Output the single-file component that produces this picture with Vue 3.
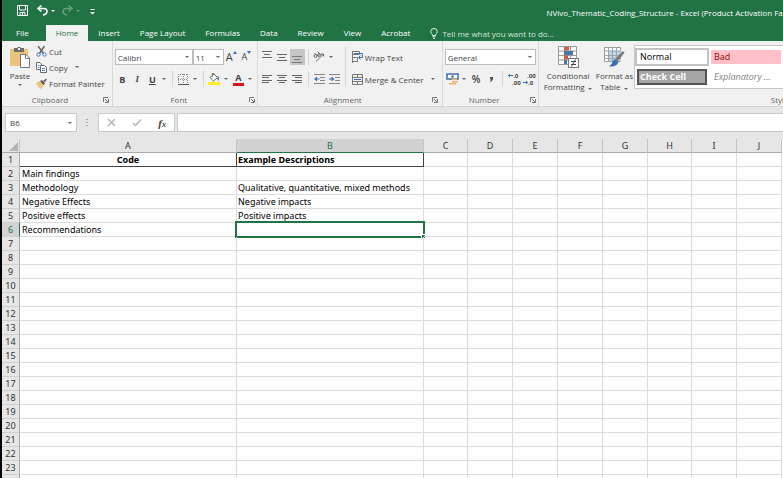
<script setup>
import { ref } from 'vue'

const tabs = ['Insert', 'Page Layout', 'Formulas', 'Data', 'Review', 'View', 'Acrobat']

const columns = [
  { name: 'A', width: 217 },
  { name: 'B', width: 187 },
  { name: 'C', width: 44 },
  { name: 'D', width: 45 },
  { name: 'E', width: 45 },
  { name: 'F', width: 45 },
  { name: 'G', width: 45 },
  { name: 'H', width: 44 },
  { name: 'I', width: 45 },
  { name: 'J', width: 45 },
]

const cells = {
  A1: 'Code',
  B1: 'Example Descriptions',
  A2: 'Main findings',
  A3: 'Methodology',
  B3: 'Qualitative, quantitative, mixed methods',
  A4: 'Negative Effects',
  B4: 'Negative impacts',
  A5: 'Positive effects',
  B5: 'Positive impacts',
  A6: 'Recommendations',
}

const rowCount = 23
const activeCol = ref('B')
const activeRow = ref(6)
const formula = ref('')
const search = ref('')

function select(col, row) {
  activeCol.value = col
  activeRow.value = row
  formula.value = cells[col + row] || ''
}
</script>

<template>
  <div class="window">
    <header class="top">
      <div class="title-bar">
        <div class="quick">
          <button class="qbtn save" aria-label="Save">
            <svg width="11" height="11" viewBox="0 0 11 11" fill="none" stroke="#fff">
              <path d="M.5 .5H10.500V10.500H.5zM2.500 .5V5H8.500V.5M3 10.500V7.500H8V10.500M5.500 8V10" />
            </svg>
          </button>
          <button class="qbtn" aria-label="Undo">
            <svg width="11" height="11" viewBox="0 0 11 11" fill="none" stroke="#fff" stroke-width="1.600">
              <path d="M4.500 .5L1 3.500L4.500 6.500M1 3.500H6.500C9 3.500 10 5 10 6.500S8.500 9.500 6 10" />
            </svg>
          </button>
          <span class="qcaret"></span>
          <button class="qbtn faded" aria-label="Redo">
            <svg width="11" height="11" viewBox="0 0 11 11" fill="none" stroke="#fff" stroke-width="1.600">
              <path d="M6.500 .5L10 3.500L6.500 6.500M10 3.500H4.500C2 3.500 1 5 1 6.500S2.500 9.500 5 10" />
            </svg>
          </button>
          <span class="qcaret faded"></span>
          <button class="qbtn more" aria-label="Customize Quick Access Toolbar">
            <svg width="5" height="6" viewBox="0 0 5 6"><path d="M.5 0H4.500V1H.5zM0 3H5L2.500 5.500z" fill="#fff" /></svg>
          </button>
        </div>
        <div class="title">NVivo_Thematic_Coding_Structure - Excel (Product Activation Failed)</div>
      </div>
      <nav class="tabs">
        <button class="tab file">File</button>
        <button class="tab active">Home</button>
        <button v-for="t in tabs" :key="t" class="tab">{{ t }}</button>
        <label class="tell">
          <svg width="8" height="11" viewBox="0 0 8 11" fill="none" stroke="#e4f0e9">
            <path d="M2.500 7.500C2.500 6 .7 5.500 .7 3.600A3.300 3.100 0 0 1 7.300 3.600C7.300 5.500 5.500 6 5.500 7.500zM2.500 8.800H5.500M3 10.300H5" />
          </svg>
          <input v-model="search" placeholder="Tell me what you want to do..." aria-label="Tell me what you want to do">
        </label>
      </nav>
    </header>

    <div class="ribbon">
      <section class="group clipboard">
        <div class="body">
          <button class="big paste">
            <svg width="22" height="22" viewBox="0 0 22 22">
              <rect x="1" y="3" width="18" height="17" fill="#ebc37c" />
              <path d="M5 2H8C8 .5 12 .5 12 2H15V6H5z" fill="#6d6d6d" />
              <rect x="9" y="2" width="2" height="2" fill="#f1f1f1" />
              <path d="M11.500 8.500H17L20.500 12V21.500H11.500z" fill="#fff" stroke="#777" />
              <path d="M16.500 8.500V12.500H20.500" fill="none" stroke="#777" />
            </svg>
            <span>Paste</span>
            <i class="caret"></i>
          </button>
          <div class="stack">
            <button class="item">
              <svg width="11" height="11" viewBox="0 0 11 11" fill="none">
                <path d="M2 0L7.500 7.500M8.500 0L3.500 7.500" stroke="#666" stroke-width="1.500" />
                <circle cx="2.500" cy="8.500" r="1.700" stroke="#4a7ebb" />
                <circle cx="8.500" cy="8.500" r="1.700" stroke="#4a7ebb" />
              </svg>
              <span>Cut</span>
            </button>
            <button class="item">
              <svg width="11" height="11" viewBox="0 0 11 11" fill="#fff" stroke="#6a6a6a">
                <path d="M.5 .5H4L5.500 2V7.500H.5z" />
                <path d="M4.500 3.500H8.500L10.500 5.500V10.500H4.500z" />
                <path d="M2 3.500H3.500M2 5.500H3.500M6 6.500H9M6 8.500H9" stroke="#4a7ebb" />
              </svg>
              <span>Copy</span>
              <i class="caret"></i>
            </button>
            <button class="item">
              <svg width="11" height="11" viewBox="0 0 11 11">
                <path d="M0 5L4 3L8 7L5 11C3 10 1 8 0 5z" fill="#ebc37c" />
                <path d="M4 3L6 2L9 5.500L7.500 7z" fill="#555" />
                <path d="M7 3L10 .5L11 1.500L8.500 4.500z" fill="#666" />
              </svg>
              <span>Format Painter</span>
            </button>
          </div>
        </div>
        <footer class="caption">
          Clipboard
          <button class="launch" aria-label="Clipboard options">
            <svg width="6" height="6" fill="none" stroke="#777"><path d="M.5 5V.5H5M2 2L5 5M5.500 2V5.500H2" /></svg>
          </button>
        </footer>
      </section>

      <section class="group">
        <div class="body rows">
          <div class="row">
            <div class="drop wide">
              <select aria-label="Font"><option>Calibri</option></select>
            </div>
            <div class="drop small">
              <select aria-label="Font size"><option>11</option></select>
            </div>
            <button class="tool grow" aria-label="Increase font size">A<svg width="4" height="3"><path d="M0 3L2 0L4 3z" fill="#3b6fb5" /></svg></button>
            <button class="tool grow less" aria-label="Decrease font size">A<svg width="4" height="3"><path d="M0 0H4L2 3z" fill="#3b6fb5" /></svg></button>
          </div>
          <div class="row">
            <button class="tool letter">B</button>
            <button class="tool letter italic">I</button>
            <button class="tool letter under">U</button>
            <i class="caret"></i>
            <span class="sep"></span>
            <button class="tool" aria-label="Borders">
              <svg width="11" height="11" viewBox="0 0 11 11" fill="none">
                <path d="M.5 0V10M5.500 0V10M9.500 0V10M0 .5H10M0 5.500H10" stroke="#8a8a8a" stroke-dasharray="1 1" />
                <path d="M0 10.500H11" stroke="#555" />
              </svg>
            </button>
            <i class="caret"></i>
            <span class="sep"></span>
            <button class="tool" aria-label="Fill color">
              <svg width="12" height="12" viewBox="0 0 12 12">
                <path d="M2 4.500L6 1L9.500 4.500L5.500 8z" fill="#fff" stroke="#666" />
                <path d="M4.500 3.500V.5H6" fill="none" stroke="#666" />
                <path d="M9.500 3C11.500 4 11 6.500 10.500 8C9.500 7 9 5 9.500 3z" fill="#3b6fb5" />
                <rect x="0" y="9" width="12" height="3" fill="#ffee1f" />
              </svg>
            </button>
            <i class="caret"></i>
            <button class="tool color">A</button>
            <i class="caret"></i>
          </div>
        </div>
        <footer class="caption">
          Font
          <button class="launch" aria-label="Font options">
            <svg width="6" height="6" fill="none" stroke="#777"><path d="M.5 5V.5H5M2 2L5 5M5.500 2V5.500H2" /></svg>
          </button>
        </footer>
      </section>

      <section class="group alignment">
        <div class="body">
          <div class="inner">
            <div class="row">
              <button class="tool" aria-label="Top align">
                <svg width="10" height="14" stroke="#666"><path d="M0 1.500H10M2 4.500H8M0 7.500H10" /></svg>
              </button>
              <button class="tool" aria-label="Middle align">
                <svg width="10" height="14" stroke="#666"><path d="M0 4.500H10M2 7.500H8M0 10.500H10" /></svg>
              </button>
              <button class="tool pressed" aria-label="Bottom align">
                <svg width="10" height="14" stroke="#777"><path d="M0 6.500H10M2 9.500H8M0 12.500H10" /></svg>
              </button>
              <span class="sep"></span>
              <button class="tool" aria-label="Orientation">
                <svg width="12" height="12" viewBox="0 0 12 12" fill="none" stroke="#666">
                  <path d="M3 10.500L10.500 3M8 3H10.500V5.500" />
                  <circle cx="2.500" cy="5" r="1.500" />
                  <path d="M1.500 2L5 5.500M4.500 .5L8 4" />
                  <circle cx="6" cy="4" r="1.300" />
                </svg>
              </button>
              <i class="caret"></i>
            </div>
            <div class="row">
              <button class="tool" aria-label="Align left">
                <svg width="10" height="10" stroke="#666"><path d="M0 1.500H10M0 3.500H7M0 6.500H10M0 8.500H7" /></svg>
              </button>
              <button class="tool" aria-label="Center">
                <svg width="10" height="10" stroke="#666"><path d="M0 1.500H10M2 3.500H8M0 6.500H10M2 8.500H8" /></svg>
              </button>
              <button class="tool" aria-label="Align right">
                <svg width="10" height="10" stroke="#666"><path d="M0 1.500H10M3 3.500H10M0 6.500H10M3 8.500H10" /></svg>
              </button>
              <span class="sep"></span>
              <button class="tool" aria-label="Decrease indent">
                <svg width="11" height="11" viewBox="0 0 11 11">
                  <path d="M0 .5H11M6 3.500H11M6 6.500H11M0 9.500H11" stroke="#888" />
                  <path d="M0 5L3 2.500V4.500H5.500V5.500H3V7.500z" fill="#3b6fb5" />
                </svg>
              </button>
              <button class="tool" aria-label="Increase indent">
                <svg width="11" height="11" viewBox="0 0 11 11">
                  <path d="M0 .5H11M6 3.500H11M6 6.500H11M0 9.500H11" stroke="#888" />
                  <path d="M5.500 5L2.500 2.500V4.500H0V5.500H2.500V7.500z" fill="#3b6fb5" />
                </svg>
              </button>
            </div>
          </div>
          <span class="sep tall"></span>
          <div class="inner">
            <div class="row">
              <button class="item">
                <svg width="11" height="12" viewBox="0 0 11 12" fill="none">
                  <path d="M.5 0V12M1 .5H7.500V3.500H1M1 6.500H5.500V10.500H1" stroke="#777" />
                  <path d="M2 2.500H10.500V6.500H7M8.500 4.500L6.500 6.500L8.500 8.500" stroke="#3b6fb5" />
                </svg>
                <span>Wrap Text</span>
              </button>
            </div>
            <div class="row">
              <button class="item">
                <svg width="11" height="11" viewBox="0 0 11 11" fill="none">
                  <path d="M.5 .5H10.500V10.500H.5zM0 3.500H11M0 7.500H11M5.500 0V3M5.500 8V11" stroke="#777" />
                  <path d="M2 5.500H9" stroke="#3b6fb5" />
                </svg>
                <span>Merge &amp; Center</span>
                <i class="caret"></i>
              </button>
            </div>
          </div>
        </div>
        <footer class="caption">
          Alignment
          <button class="launch" aria-label="Alignment options">
            <svg width="6" height="6" fill="none" stroke="#777"><path d="M.5 5V.5H5M2 2L5 5M5.500 2V5.500H2" /></svg>
          </button>
        </footer>
      </section>

      <section class="group">
        <div class="body rows">
          <div class="row">
            <div class="drop number">
              <select aria-label="Number format"><option>General</option></select>
            </div>
          </div>
          <div class="row">
            <button class="tool" aria-label="Accounting format">
              <svg width="13" height="12" viewBox="0 0 13 12">
                <path d="M1 1H12V6H1z" fill="#fff" stroke="#3b6fb5" stroke-width="1.500" />
                <circle cx="6.500" cy="3.500" r="1.300" fill="#3b6fb5" />
                <path d="M6 5.500H11V7H6zM6 8H12V9.500H6zM3 10H10V11.500H3z" fill="#ebb665" />
              </svg>
            </button>
            <i class="caret"></i>
            <button class="tool percent">%</button>
            <button class="tool" aria-label="Comma style">
              <svg width="5" height="7"><path d="M1 1H4V3.500L2 6H1L2 3.500H1z" fill="#555" /></svg>
            </button>
            <span class="sep"></span>
            <button class="tool decimals" aria-label="Increase decimal">
              <svg width="5" height="5"><path d="M0 2.500L2 .5V2H5V3H2V4.500z" fill="#3b6fb5" /></svg>
              <span>.0</span><span class="long">.00</span>
            </button>
            <button class="tool decimals" aria-label="Decrease decimal">
              <span class="long">.00</span>
              <svg width="5" height="5"><path d="M5 2.500L3 .5V2H0V3H3V4.500z" fill="#3b6fb5" /></svg>
              <span>.0</span>
            </button>
          </div>
        </div>
        <footer class="caption">
          Number
          <button class="launch" aria-label="Number options">
            <svg width="6" height="6" fill="none" stroke="#777"><path d="M.5 5V.5H5M2 2L5 5M5.500 2V5.500H2" /></svg>
          </button>
        </footer>
      </section>

      <section class="group styles">
        <div class="body">
          <button class="big">
            <svg width="22" height="22" viewBox="0 0 22 22">
              <path d="M1.500 .5H19.500V18.500H1.500z" fill="#fff" stroke="#999" />
              <path d="M1 5H20M1 9.500H20M1 14H20M7.500 0V19M13.500 0V19" stroke="#999" />
              <path d="M7 1H12V4.500H7zM7 9.500H11V13.500H7z" fill="#cf5b45" />
              <path d="M7 5H16V9H7zM7 14H10V18H7z" fill="#4677a8" />
              <rect x="11.500" y="12.500" width="10" height="9" fill="#fff" stroke="#777" />
              <path d="M14 15.500H19M14 18.500H19M18.500 13.500L14.500 20.500" stroke="#444" />
            </svg>
            <span>Conditional</span>
            <span>Formatting <i class="caret"></i></span>
          </button>
          <button class="big table">
            <svg width="22" height="22" viewBox="0 0 22 22">
              <path d="M1.500 1.500H17.500V15.500H1.500z" fill="#fff" stroke="#999" />
              <rect x="6" y="5" width="12" height="10" fill="#c3d3e6" />
              <path d="M1 5H18M1 9.500H18M1 12.500H18M5.500 1V16M9.500 1V16M13.500 1V16" stroke="#9aa5b1" />
              <path d="M19.500 5L21.500 6.500L15 15L12.500 13z" fill="#777" />
              <path d="M12 13L15.500 16C14 20 10 21 6 20.500C9 19 9 15 12 13z" fill="#3b6fb5" />
            </svg>
            <span>Format as</span>
            <span>Table <i class="caret"></i></span>
          </button>
          <div class="gallery">
            <button class="swatch normal">Normal</button>
            <button class="swatch bad">Bad</button>
            <button class="swatch check">Check Cell</button>
            <button class="swatch note">Explanatory ...</button>
          </div>
        </div>
        <footer class="caption">Styles</footer>
      </section>
    </div>

    <div class="formula-bar">
      <div class="name-box">
        <input :value="activeCol + activeRow" aria-label="Name box" readonly>
        <i class="caret"></i>
      </div>
      <span class="dots"></span>
      <div class="fx-box">
        <button aria-label="Cancel"><svg width="9" height="9" stroke="#b5b5b5" stroke-width="1.500"><path d="M1 1L8 8M8 1L1 8" /></svg></button>
        <button aria-label="Enter"><svg width="10" height="9" fill="none" stroke="#b5b5b5" stroke-width="1.500"><path d="M1 5L3.500 7.500L9 1.500" /></svg></button>
        <button class="fx" aria-label="Insert function">f<sub>x</sub></button>
      </div>
      <input v-model="formula" class="formula" aria-label="Formula bar">
    </div>

    <div class="grid">
      <table class="sheet">
        <colgroup>
          <col class="head-col">
          <col v-for="c in columns" :key="c.name" :style="{ width: c.width + 'px' }">
        </colgroup>
        <thead>
          <tr>
            <th class="corner"><svg width="9" height="9"><path d="M9 0V9H0z" fill="#b4b4b4" /></svg></th>
            <th v-for="c in columns" :key="c.name" scope="col" :class="{ current: c.name === activeCol }">{{ c.name }}</th>
          </tr>
        </thead>
        <tbody>
          <tr v-for="r in rowCount" :key="r" :class="{ heading: r === 1 }">
            <th scope="row" :class="{ current: r === activeRow }">{{ r }}</th>
            <td v-for="c in columns" :key="c.name" :class="'col-' + c.name" @click="select(c.name, r)">
              {{ cells[c.name + r] }}
              <span v-if="c.name === activeCol && r === activeRow" class="selection"></span>
            </td>
          </tr>
          <tr>
            <th></th>
            <td v-for="c in columns" :key="c.name"></td>
          </tr>
        </tbody>
      </table>
    </div>
  </div>
</template>

<style>
body {
  margin: 0;
  overflow: hidden;
}
</style>

<style scoped>
.window {
  height: 100vh;
  box-sizing: border-box;
  display: flex;
  flex-direction: column;
  overflow: hidden;
  border-left: 2px solid #000;
  background: #e6e6e6;
  color: #444;
  font-family: 'Open Sans', 'Noto Sans', sans-serif;
  font-size: 8px;
}

button,
input,
select {
  margin: 0;
  padding: 0;
  border: 0;
  border-radius: 0;
  background: none;
  color: inherit;
  font: inherit;
  outline: none;
}

svg {
  display: block;
  flex: none;
}

/* title bar and tabs */
.top {
  background: #217346;
  color: #fff;
}

.title-bar {
  display: flex;
  height: 25px;
}

.quick {
  flex: 9;
  display: flex;
  align-items: center;
  padding: 0 0 4px 12px;
}

.qbtn {
  width: 16px;
  height: 16px;
  display: flex;
  align-items: center;
  justify-content: center;
}

.save { margin-right: 4px; }
.more { padding-top: 3px; }

.qcaret {
  margin: 0 4px 0 1px;
  border: 2px solid transparent;
  border-top-color: #fff;
  border-bottom: 0;
}

.faded { opacity: 0.3; }

.title {
  flex: 4;
  min-width: 0;
  line-height: 25px;
  white-space: nowrap;
}

.tabs {
  display: flex;
  height: 16px;
}

.tab {
  padding: 0 10px;
  line-height: 16px;
  white-space: nowrap;
}

.tab.file { padding: 0 17px 0 14px; }
.tab.active { background: #f1f1f1; color: #217346; }

.tell {
  flex: 1;
  display: flex;
  align-items: center;
  gap: 4px;
  margin-left: 10px;
}

.tell input { flex: 1; }
.tell input::placeholder { color: #d3e5da; opacity: 1; }

/* ribbon */
.ribbon {
  display: flex;
  height: 65px;
  background: #f1f1f1;
  border-bottom: 1px solid #d2d2d2;
}

.group {
  flex: none;
  display: flex;
  flex-direction: column;
  padding: 0 2px;
  border-right: 1px solid #dadada;
}

.clipboard { padding: 0 7px 0 5px; }
.alignment { padding-right: 4px; }

.body {
  display: flex;
  height: 52px;
  padding-top: 2px;
}

.caption {
  position: relative;
  padding-right: 12px;
  line-height: 12px;
  text-align: center;
  color: #666;
}

.launch {
  position: absolute;
  right: 0;
  top: 3px;
}

.clipboard .launch { right: -4px; }

.caret {
  flex: none;
  display: inline-flex;
  align-items: center;
  justify-content: center;
  width: 9px;
  height: 9px;
}

.caret::after {
  content: '';
  border: 2px solid transparent;
  border-top-color: #666;
  border-bottom: 0;
}

.big {
  display: flex;
  flex-direction: column;
  align-items: center;
  padding: 3px 2px 0;
  line-height: 11px;
  white-space: nowrap;
}

.big.table { padding: 3px 1px 0; }
.big svg { margin-bottom: 2px; }
.big .caret { width: 6px; height: 8px; }

.stack {
  display: flex;
  flex-direction: column;
}

.item {
  display: flex;
  align-items: center;
  gap: 2px;
  height: 16px;
  padding-left: 3px;
  white-space: nowrap;
}

.item .caret { margin-left: 3px; }

.rows {
  flex-direction: column;
  height: 51px;
  padding-top: 3px;
}

.inner { padding-top: 1px; }

.row {
  display: flex;
  align-items: center;
  height: 18px;
  padding-top: 4px;
}

.tool {
  width: 15px;
  height: 16px;
  display: flex;
  align-items: center;
  justify-content: center;
}

.pressed { background: #c5c5c5; }

.sep {
  width: 1px;
  height: 16px;
  margin: 0 3px;
  background: #d5d5d5;
}

.sep.tall { height: 40px; margin-top: 4px; }

.drop {
  position: relative;
  height: 14px;
  border: 1px solid #bcbcbc;
  background: #fff;
}

.drop select {
  width: 100%;
  height: 14px;
  padding-left: 2px;
  appearance: none;
}

.drop::after {
  content: '';
  position: absolute;
  right: 3px;
  top: 6px;
  border: 2px solid transparent;
  border-top-color: #666;
  border-bottom: 0;
}

.wide { width: 76px; }
.small { width: 29px; }
.number { width: 89px; }

.grow { align-items: flex-start; font-size: 11px; line-height: 16px; }
.less { font-size: 9px; }
.grow svg { margin-top: 2px; }

.letter { font-size: 9px; font-weight: 700; }
.italic { font-family: 'Liberation Serif', serif; font-style: italic; }
.under { text-decoration: underline; }

.color {
  width: 11px;
  height: 13px;
  margin: 0 2px;
  border-bottom: 3px solid #d8131b;
  font-size: 9px;
  font-weight: 700;
}

.percent { font-size: 10px; font-weight: 600; }

.decimals {
  flex-wrap: wrap;
  align-content: center;
  font-family: Roboto, sans-serif;
  font-size: 6px;
  font-weight: 700;
  line-height: 7px;
}

.long { width: 100%; text-align: right; }

.styles { flex: 0 0 480px; padding-left: 3px; }
.styles .caption { padding-right: 0; }

.gallery {
  flex: 1;
  display: grid;
  grid-template-columns: 74px 70px;
  grid-template-rows: 18px 16px;
  gap: 3px 2px;
  height: 38px;
  margin-top: 2px;
  padding: 2px 0;
  border: 1px solid #c6c6c6;
  background: #fff;
}

.swatch {
  padding: 0 3px;
  text-align: left;
  font-size: 9px;
  line-height: 12px;
  white-space: nowrap;
}

.normal { border: 2px solid #c3c3c3; color: #000; }
.bad { margin: 2px 0; background: #ffc0c8; color: #9c0006; }
.check { margin: 0 2px; padding: 0 1px; border: 2px solid #555; background: #a5a5a5; color: #fff; font-weight: 700; }
.note { color: #7f7f7f; font-style: italic; }

/* formula bar */
.formula-bar {
  display: flex;
  height: 19px;
  padding: 6px 0 7px 3px;
}

.name-box,
.fx-box,
.formula {
  box-sizing: border-box;
  border: 1px solid #cacaca;
  background: #fff;
}

.name-box {
  display: flex;
  align-items: center;
  width: 72px;
  padding: 0 2px 0 4px;
}

.name-box input { flex: 1; min-width: 0; }

.dots {
  width: 2px;
  height: 8px;
  margin: 6px 10px 6px 9px;
  background: repeating-linear-gradient(#aaa 0 1px, transparent 1px 3px);
}

.fx-box {
  display: flex;
  align-items: center;
  justify-content: space-around;
  width: 77px;
  margin-right: 2px;
}

.fx {
  font-family: 'Liberation Serif', serif;
  font-size: 11px;
  font-style: italic;
  font-weight: 700;
}

.fx sub { font-size: 8px; vertical-align: baseline; }

.formula { flex: 1; padding: 0 4px; border-right: 0; }

/* sheet */
.grid {
  flex: 1;
  min-height: 0;
  overflow: hidden;
  background: #fff;
}

.sheet {
  table-layout: fixed;
  width: 0;
  border-collapse: separate;
  border-spacing: 0;
  color: #000;
  font-family: 'Noto Sans', 'Open Sans', sans-serif;
  font-size: 9px;
}

.head-col { width: 18px; }

.sheet th,
.sheet td {
  box-sizing: border-box;
  height: 14px;
  padding: 0;
  line-height: 13px;
  white-space: nowrap;
  border-right: 1px solid #dcdcdc;
  border-bottom: 1px solid #dcdcdc;
}

.sheet td {
  position: relative;
  padding-left: 1px;
}

.sheet .col-A { padding-left: 2px; }

.sheet th {
  background: #e6e6e6;
  color: #333;
  font-weight: 400;
  text-align: center;
}

.sheet tbody th { border-right-color: #ababab; border-bottom-color: #cfcfcf; }
.sheet thead th { border-right-color: #c4c4c4; border-bottom-color: #ababab; }

.sheet th.current {
  background: #d2d2d2;
  color: #217346;
}

.sheet thead th.current { border-bottom-color: #217346; }
.sheet tbody th.current { border-right-color: #217346; }

.corner svg { margin: 2px 1px 0 auto; }

.sheet .heading .col-A,
.sheet .heading .col-B {
  border-color: #444;
  font-weight: 700;
}

.sheet .heading .col-A { padding: 0; text-align: center; }

.selection {
  position: absolute;
  inset: -2px -2px -2px -2px;
  border: 2px solid #217346;
}

.selection::after {
  content: '';
  position: absolute;
  right: -3px;
  bottom: -3px;
  width: 3px;
  height: 3px;
  border: 1px solid #fff;
  background: #217346;
}
</style>
